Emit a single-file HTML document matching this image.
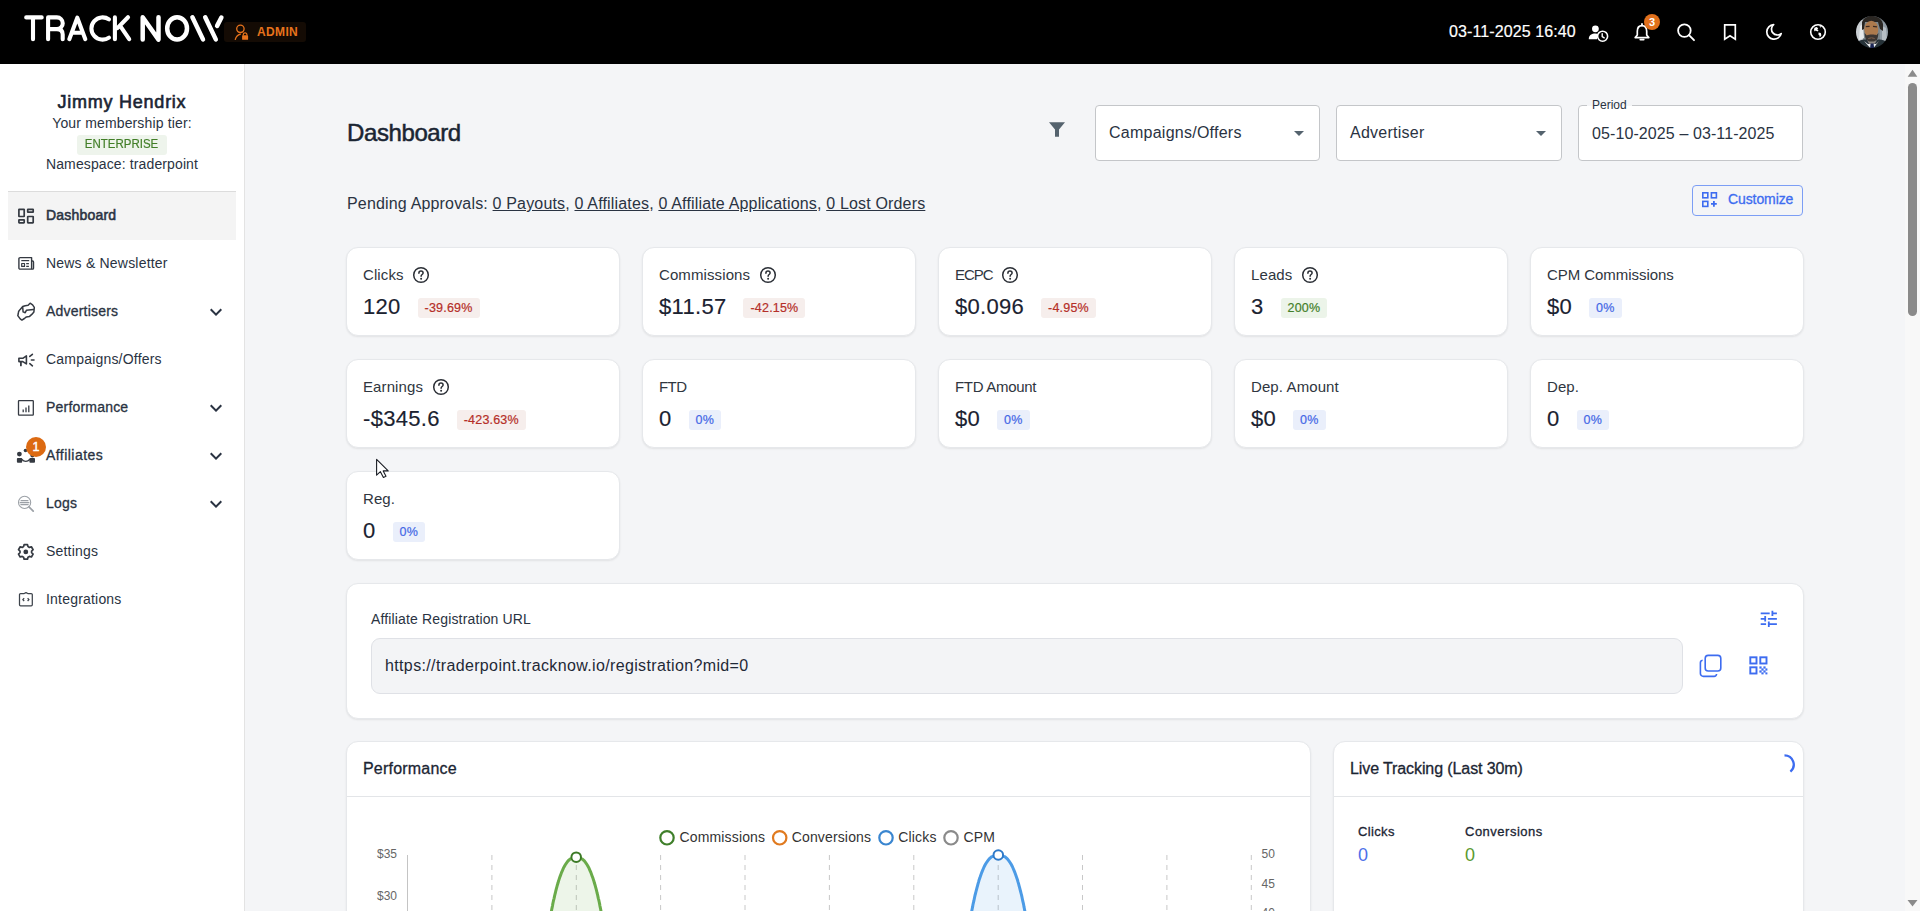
<!DOCTYPE html>
<html><head><meta charset="utf-8">
<style>
*{box-sizing:border-box;margin:0;padding:0}
html,body{width:1920px;height:911px;overflow:hidden}
body{font-family:"Liberation Sans",sans-serif;background:#f4f5f7;color:#1f2937;position:relative}
.a{position:absolute;white-space:nowrap}
#hdr{position:absolute;left:0;top:0;width:1920px;height:64px;background:#000}
#side{position:absolute;left:0;top:64px;width:245px;height:847px;background:#fff;border-right:1px solid #e3e3e3}
.nav{position:absolute;left:8px;width:228px;height:48px}
.nav.act{background:#f4f4f4}
.nav .t{position:absolute;left:38px;top:16px;font-size:14px;line-height:14px;color:#2a3342;letter-spacing:.2px}
.nav svg{position:absolute;left:8px;top:12px}
.nav .chev{position:absolute;left:196px;top:12px}
.med{-webkit-text-stroke:0.3px currentColor;letter-spacing:.2px}
.card{position:absolute;background:#fff;border-radius:12px;border:1px solid #e6e8eb;box-shadow:0 1px 2px rgba(0,0,0,.08)}
.sc{width:274px;height:89px}
.sc .l{position:absolute;left:16px;top:18px;font-size:15px;line-height:15px;color:#2f3640;letter-spacing:.1px;display:flex;align-items:center;white-space:nowrap;height:18px;top:17px}
.sc .hp{margin-left:8.5px;position:relative;top:.5px}
.sc .vr{position:absolute;left:16px;top:50px;height:20px;display:flex;align-items:center;white-space:nowrap}
.sc .v{font-size:22px;line-height:20px;color:#1b2230;margin-right:17px;letter-spacing:.3px;-webkit-text-stroke:.15px #1b2230;position:relative;top:-1.5px}
.sc .b{height:20px;padding:0 7px;font-size:12.5px;line-height:20px;border-radius:3px;letter-spacing:.2px;-webkit-text-stroke:.2px currentColor}
.neg{background:#f6eeec;color:#b52f28}
.pos{background:#ecf4e9;color:#437f2a}
.zer{background:#eaeffb;color:#4467e6}
.help{position:absolute;top:18px}
</style></head>
<body>
<div id="hdr">
  <svg class="a" style="left:0;top:0" width="320" height="64" viewBox="0 0 320 64">
    <g fill="none" stroke="#fff" stroke-linecap="round" stroke-linejoin="round">
      <g stroke-width="4.1">
        <path d="M26.2 17.4H41.7M33 17.4V39.2"/>
        <path d="M48.1 39.2V17.4H56.9a5.85 5.85 0 0 1 0 11.7H48.1M56.9 29.1C60.5 29.1 62.7 31 62.7 34.5V39.2"/>
        <path d="M69.3 39.2L77.3 17.6L85.3 39.2M72.4 32.8H82.2"/>
        <path d="M109 19.4A11.15 11.15 0 1 0 109 37.6"/>
        <path d="M114.9 17.4V39.2M117.4 28.1L128 17.2M120.5 26.3L129.2 39.2"/>
      </g>
      <g stroke-width="4.5">
        <path d="M142.7 39.6V17.3L158.5 39.6V17.3"/>
        <ellipse cx="177.1" cy="28.45" rx="9.9" ry="11.15"/>
        <path d="M192.4 17.3L203 39.4M205.2 17.3L215.8 39.4M221.4 17.5L217.1 25.9"/>
      </g>
    </g>
  </svg>
  <div class="a" style="left:224px;top:22px;width:82px;height:20px;background:#140b04;border-radius:3px"></div>
  <svg class="a" style="left:234px;top:24px" width="16" height="16" viewBox="0 0 16 16">
    <circle cx="6.4" cy="4.8" r="3.7" fill="none" stroke="#e8731c" stroke-width="1.3"/>
    <path d="M1.3 15.4Q2.4 11.4 6.4 10.2" fill="none" stroke="#e8731c" stroke-width="1.3" stroke-linecap="round"/>
    <rect x="8.1" y="11.3" width="6" height="4.5" rx=".6" fill="#e8731c"/>
    <path d="M9.3 11.6V10.6a1.8 1.8 0 0 1 3.6 0V11.6" fill="none" stroke="#e8731c" stroke-width="1.2"/>
  </svg>
  <div class="a" style="left:257px;top:26px;font-size:12px;line-height:12px;font-weight:bold;color:#e8731c;letter-spacing:.35px">ADMIN</div>

  <div class="a" style="left:1449px;top:24px;font-size:16px;line-height:16px;color:#fff;letter-spacing:.1px;-webkit-text-stroke:.2px #fff">03-11-2025 16:40</div>

  <svg class="a" style="left:1588px;top:24px" width="21" height="19" viewBox="0 0 21 19">
    <circle cx="7.4" cy="4.8" r="3.4" fill="#fff"/>
    <path d="M0.8 15.2C0.8 11.3 4 9.6 7.2 9.6C8.6 9.6 9.8 9.9 10.8 10.4C9.6 11.6 9 13.2 9 15.2Z" fill="#fff"/>
    <circle cx="14.6" cy="12.2" r="5" fill="#000" stroke="#fff" stroke-width="1.6"/>
    <path d="M14.2 9.8V12.5L16.2 13.8" fill="none" stroke="#fff" stroke-width="1.4" stroke-linecap="round"/>
  </svg>
  <svg class="a" style="left:1633px;top:23px" width="18" height="19" viewBox="0 0 18 19">
    <path d="M9 2.6C6 2.6 4.3 5 4.3 8.2V12L2.2 14.6H15.8L13.7 12V8.2C13.7 5 12 2.6 9 2.6Z" fill="none" stroke="#fff" stroke-width="1.7" stroke-linejoin="round"/><path d="M9 .9V2.4" stroke="#fff" stroke-width="1.8" stroke-linecap="round"/>
    <path d="M7.3 16.6H10.7" stroke="#fff" stroke-width="1.8" stroke-linecap="round"/>
  </svg>
  <div class="a" style="left:1644px;top:14px;width:16px;height:16px;border-radius:50%;background:#e0701c;color:#fff;font-size:11px;line-height:16px;text-align:center;font-weight:bold">3</div>
  <svg class="a" style="left:1676px;top:22px" width="20" height="20" viewBox="0 0 20 20">
    <circle cx="8.4" cy="8.6" r="6.3" fill="none" stroke="#fff" stroke-width="1.8"/>
    <path d="M13 13.2L18 18.2" stroke="#fff" stroke-width="1.9" stroke-linecap="round"/>
  </svg>
  <svg class="a" style="left:1722px;top:23px" width="16" height="18" viewBox="0 0 16 18">
    <path d="M2.7 1.8H13.3V16.2L8 12.8L2.7 16.2Z" fill="none" stroke="#fff" stroke-width="1.7" stroke-linejoin="miter"/>
  </svg>
  <svg class="a" style="left:1764px;top:22px" width="20" height="20" viewBox="0 0 20 20">
    <path d="M9.6 2.6A7.3 7.3 0 1 0 17.2 11.6A5.6 5.6 0 0 1 9.6 2.6Z" fill="none" stroke="#fff" stroke-width="1.7" stroke-linejoin="round"/>
  </svg>
  <svg class="a" style="left:1808px;top:22px" width="20" height="20" viewBox="0 0 20 20">
    <circle cx="10" cy="10" r="7.3" fill="none" stroke="#fff" stroke-width="1.6"/>
    <path d="M6.4 5.8L8.6 5L10.2 6.2L9.2 7.4L10.6 8.2L9.4 9.6L7.6 8.6L6.8 9.4L6 8Z" fill="#fff"/>
    <path d="M10.6 10.6L12.8 11L13.4 13.2L11.8 15.4L11.4 13.4L10.4 12.4Z" fill="#fff"/>
    <path d="M11.6 4L13.4 4.6L12.2 5.8Z" fill="#fff"/>
  </svg>
  <svg class="a" style="left:1856px;top:16px" width="32" height="32" viewBox="0 0 32 32">
    <defs><clipPath id="av"><circle cx="16" cy="16" r="16"/></clipPath><filter id="bl"><feGaussianBlur stdDeviation=".6"/></filter></defs>
    <g clip-path="url(#av)"><g filter="url(#bl)">
      <rect x="-2" y="-2" width="36" height="36" fill="#7d878d"/>
      <rect x="-2" y="4" width="9" height="30" fill="#c9ced2"/>
      <rect x="24" y="6" width="10" height="22" fill="#8f9aa3"/>
      <path d="M4 10L7 8L8 22L3 24Z" fill="#e6e9eb"/>
      <path d="M26 10L30 12L31 26L26 24Z" fill="#b6bec4"/>
      <path d="M6 6C8 1 13 -0.5 17 0C22 0.5 26 3 27 8L27 15L24 13L22 6L9 6L8 13L6 14Z" fill="#2a2624"/>
      <ellipse cx="15.3" cy="13.4" rx="7" ry="8.6" fill="#ad7a4e"/>
      <path d="M9.8 10.6L13.6 10.4M17 10.4L21 10.8" stroke="#3a2a22" stroke-width="1.2"/>
      <path d="M8.6 17C9 24 12 28.6 15.6 28.6C19.2 28.6 22 24 22.4 17L20.4 19.2C18.6 18.4 12.8 18.4 10.8 19.4Z" fill="#3a3431"/><path d="M10.5 24C12 27.5 14 28.6 15.6 28.6C17.2 28.6 19.4 27.5 20.6 24L18 25.5H13Z" fill="#8d8783"/>
      <path d="M12.4 22.6C14 21.8 17 21.8 18.6 22.6" stroke="#8a6a55" stroke-width="1"/>
      <path d="M12 27C14 28 17 28 20 27L16 32Z" fill="#7d7570"/>
      <path d="M-2 34L1 26C4 24 8 23 11 24L16 34Z" fill="#283038"/>
      <path d="M34 34L31 26C28 24 24 23 21 24L16 34Z" fill="#283038"/>
      <path d="M8 25L16 34L23 25L20 28L12 28Z" fill="#e9ecee"/>
      <path d="M14.6 27.4H17.6L18.2 33H14Z" fill="#1c2755"/>
    </g></g>
  </svg>
</div>

<div id="side">
  <div class="a" style="left:0;top:29px;width:244px;text-align:center;font-size:18px;line-height:18px;color:#1b2533" ><span style="letter-spacing:.75px;-webkit-text-stroke:.6px #1b2533">Jimmy Hendrix</span></div>
  <div class="a" style="left:0;top:52px;width:244px;text-align:center;font-size:14px;line-height:14px;color:#2a3342;letter-spacing:.15px">Your membership tier:</div>
  <div class="a" style="left:77px;top:71px;width:90px;height:20px;background:#eef4ec;border-radius:3px;text-align:center;font-size:13px;line-height:20px;color:#427f28;-webkit-text-stroke:.2px #427f28"><span style="display:inline-block;transform:scaleX(.885);position:relative;top:-1px">ENTERPRISE</span></div>
  <div class="a" style="left:0;top:93px;width:244px;text-align:center;font-size:14px;line-height:14px;color:#2a3342;letter-spacing:.12px">Namespace: traderpoint</div>
  <div class="a" style="left:8px;top:127px;width:228px;height:1px;background:#dcdcdc"></div>
  <div class="nav act" style="top:128px"><svg width="24" height="24" viewBox="0 0 24 24"><g fill="none" stroke="#353a42" stroke-width="1.7"><rect x="2.9" y="5.3" width="5.3" height="7.2" rx=".3"/><rect x="2.9" y="15.8" width="5.3" height="3.1" rx=".3"/><rect x="11.7" y="5.3" width="5.5" height="2.9" rx=".3"/><rect x="11.7" y="12.5" width="5.5" height="6.4" rx=".3"/></g></svg><div class="t" style="-webkit-text-stroke:.55px #2a3342">Dashboard</div></div>
  <div class="nav" style="top:176px"><svg width="24" height="24" viewBox="0 0 24 24"><g fill="none" stroke="#353a42" stroke-width="1.4" stroke-linejoin="round"><path d="M4.1 5.6H15.6V17.1H4.1A1.2 1.2 0 0 1 2.9 15.9V6.8A1.2 1.2 0 0 1 4.1 5.6Z"/><path d="M15.6 9H16.6A.9.9 0 0 1 17.5 9.9V16.2A.9.9 0 0 1 16.6 17.1H15.6"/><path d="M5.3 8.6H13.2" stroke-width="1.2"/><rect x="5.7" y="11.5" width="2.8" height="2.9" stroke-width="1.2"/><path d="M10.2 11.7H12.9M10.2 14.3H12.9" stroke-width="1.2"/></g></svg><div class="t " style="">News &amp; Newsletter</div></div>
  <div class="nav" style="top:224px"><svg width="24" height="24" viewBox="0 0 24 24"><g fill="none" stroke="#353a42" stroke-width="1.5" stroke-linejoin="round" stroke-linecap="round"><path d="M1.8 15.6L4.2 18.9L5.9 20.1L8.4 18.5L10.4 16.9L13.3 16.6L15.8 14.4L17.9 11.9L18.3 7.4L16.6 4.9L14.1 3.2L12.1 5.3L9.2 5.7L6.7 6.5L4.2 9.4L2.6 11.5L2.2 14Z"/><path d="M6.7 7.4L7.1 11.9L9.2 12.7L10.4 10.3L17.4 9.4"/></g></svg><div class="t med" style="">Advertisers</div><svg class="chev" width="24" height="24" viewBox="0 0 24 24"><path d="M16.59 8.59L12 13.17 7.41 8.59 6 10l6 6 6-6z" fill="#2a3342"/></svg></div>
  <div class="nav" style="top:272px"><svg width="24" height="24" viewBox="0 0 24 24"><g fill="none" stroke="#353a42" stroke-width="1.6" stroke-linejoin="round" stroke-linecap="round"><path d="M2.9 10.3H6.8L10.4 7.9V15.9L6.8 13.6H2.9Z"/><path d="M4.9 13.8V17.4" stroke-width="1.8"/><path d="M13.8 8.4L16.4 6.3M15.4 12H18M13.8 15.7L16.4 17.8"/></g></svg><div class="t " style="">Campaigns/Offers</div></div>
  <div class="nav" style="top:320px"><svg width="24" height="24" viewBox="0 0 24 24"><g fill="none" stroke="#353a42" stroke-width="1.3"><rect x="2.5" y="4.6" width="14.8" height="14.6" rx=".6"/></g><g stroke="#353a42" stroke-width="1.3"><path d="M7.2 16.2V13.4M10 16.2V11.6M12.8 16.2V9.6"/></g></svg><div class="t med" style="">Performance</div><svg class="chev" width="24" height="24" viewBox="0 0 24 24"><path d="M16.59 8.59L12 13.17 7.41 8.59 6 10l6 6 6-6z" fill="#2a3342"/></svg></div>
  <div class="nav" style="top:368px"><svg width="24" height="24" viewBox="0 0 24 24"><g fill="#353a42"><circle cx="3.4" cy="10.1" r="2.4"/><circle cx="9.5" cy="6.5" r="1.8"/><circle cx="16.4" cy="11.4" r="2"/><rect x="0.9" y="14.1" width="5.3" height="4.6" rx=".9"/><rect x="13.4" y="14.1" width="5.6" height="4.6" rx=".9"/></g><path d="M5.6 15.2Q9.8 19.6 14 15.2" fill="none" stroke="#353a42" stroke-width="1.4"/></svg><div class="t med" style="letter-spacing:.45px">Affiliates</div><svg class="chev" width="24" height="24" viewBox="0 0 24 24"><path d="M16.59 8.59L12 13.17 7.41 8.59 6 10l6 6 6-6z" fill="#2a3342"/></svg></div>
  <div class="nav" style="top:416px"><svg width="24" height="24" viewBox="0 0 24 24"><g fill="none" stroke="#9ca1a7" stroke-width="1.1"><circle cx="8.6" cy="10.4" r="6.1"/><path d="M13 14.8L17.2 19.2" stroke-width="1.7" stroke-linecap="round"/><path d="M4.6 8.6H12.4M3.6 10.6H13.4M4.4 12.6H12.6"/></g></svg><div class="t med" style="">Logs</div><svg class="chev" width="24" height="24" viewBox="0 0 24 24"><path d="M16.59 8.59L12 13.17 7.41 8.59 6 10l6 6 6-6z" fill="#2a3342"/></svg></div>
  <div class="nav" style="top:464px"><svg width="24" height="24" viewBox="0 0 24 24"><g transform="translate(9.8 11.9)"><path fill="none" stroke="#353a42" stroke-width="1.7" stroke-linejoin="round" d="M-1.7-7.3H1.7L2.2-5.3L3.6-4.5L5.6-5.1L7.3-2.2L5.8-0.8V0.8L7.3 2.2L5.6 5.1L3.6 4.5L2.2 5.3L1.7 7.3H-1.7L-2.2 5.3L-3.6 4.5L-5.6 5.1L-7.3 2.2L-5.8 0.8V-0.8L-7.3-2.2L-5.6-5.1L-3.6-4.5L-2.2-5.3Z"/><circle r="2.4" fill="#353a42"/></g></svg><div class="t " style="">Settings</div></div>
  <div class="nav" style="top:512px"><svg width="24" height="24" viewBox="0 0 24 24"><g fill="none" stroke="#3d434b" stroke-width="1.25" stroke-linejoin="round"><path d="M4.6 5.5H8.2L10 4.6L11.8 5.5H15.2A1.1 1.1 0 0 1 16.3 6.6V16.8A1.1 1.1 0 0 1 15.2 17.9H4.6A1.1 1.1 0 0 1 3.5 16.8V6.6A1.1 1.1 0 0 1 4.6 5.5Z"/><path d="M8.2 10.2L6.8 11.6L8.2 13M11.6 10.2L13 11.6L11.6 13" stroke-width="1.3"/></g></svg><div class="t " style="">Integrations</div></div>
  <div class="a" style="left:26px;top:373px;width:20px;height:20px;border-radius:50%;background:#dc6a12;color:#fff;font-size:12.5px;line-height:20px;text-align:center;-webkit-text-stroke:.4px #fff">1</div>
</div>


<div class="a med" style="left:347px;top:121px;font-size:24px;line-height:24px;color:#1b2533;letter-spacing:-.4px;-webkit-text-stroke:.5px #1b2533">Dashboard</div>
<svg class="a" style="left:1048px;top:121px" width="18" height="17" viewBox="0 0 18 17"><path d="M1 1.2H17L11 8.6V15.8H7V8.6Z" fill="#55636e"/></svg>
<div class="a" style="left:1095px;top:105px;width:225px;height:56px;background:#fff;border:1px solid #c4c6c9;border-radius:4px"></div>
<div class="a" style="left:1109px;top:125px;font-size:16px;line-height:16px;color:#2a3342;letter-spacing:.25px">Campaigns/Offers</div>
<svg class="a" style="left:1287px;top:121px" width="24" height="24" viewBox="0 0 24 24"><path d="M7 10l5 5 5-5z" fill="#55636e"/></svg>
<div class="a" style="left:1336px;top:105px;width:226px;height:56px;background:#fff;border:1px solid #c4c6c9;border-radius:4px"></div>
<div class="a" style="left:1350px;top:125px;font-size:16px;line-height:16px;color:#2a3342;letter-spacing:.25px">Advertiser</div>
<svg class="a" style="left:1529px;top:121px" width="24" height="24" viewBox="0 0 24 24"><path d="M7 10l5 5 5-5z" fill="#55636e"/></svg>
<div class="a" style="left:1578px;top:105px;width:225px;height:56px;background:#fff;border:1px solid #c4c6c9;border-radius:4px"></div>
<div class="a" style="left:1587px;top:99px;padding:0 5px;height:12px;background:#f4f5f7;font-size:12px;line-height:12px;color:#2a3342;background:linear-gradient(#f4f5f7 0,#f4f5f7 7px,#fff 7px)">Period</div>
<div class="a" style="left:1592px;top:126px;font-size:16px;line-height:16px;color:#2a3342;letter-spacing:.1px">05-10-2025 &ndash; 03-11-2025</div>
<div class="a" style="left:347px;top:196px;font-size:16px;line-height:16px;color:#2a3342;letter-spacing:.17px">Pending Approvals: <u>0 Payouts</u>, <u>0 Affiliates</u>, <u>0 Affiliate Applications</u>, <u>0 Lost Orders</u></div>
<div class="a" style="left:1692px;top:185px;width:111px;height:31px;border:1px solid #7c9ef5;border-radius:4px"></div>
<svg class="a" style="left:1701px;top:191px" width="18" height="18" viewBox="0 0 18 18"><g fill="none" stroke="#3d6cf0" stroke-width="1.6"><rect x="1.8" y="1.8" width="5" height="5"/><rect x="10.4" y="1.8" width="5" height="5"/><rect x="1.8" y="10.4" width="5" height="5"/></g><path d="M12.9 10V15.8M10 12.9H15.8" stroke="#3d6cf0" stroke-width="1.8"/></svg>
<div class="a med" style="left:1728px;top:192px;font-size:14px;line-height:14px;color:#3d6cf0;letter-spacing:-.1px">Customize</div>
<div class="card sc" style="left:346px;top:247px"><div class="l">Clicks<svg class="hp" width="18" height="18" viewBox="0 0 18 18"><circle cx="9" cy="9" r="7.3" fill="none" stroke="#2b2f36" stroke-width="1.5"/><path d="M6.9 7.2C6.9 5.9 7.8 5.1 9 5.1C10.2 5.1 11.1 5.9 11.1 7C11.1 8.5 9.1 8.5 9.1 10.2" fill="none" stroke="#2b2f36" stroke-width="1.5" stroke-linecap="round"/><circle cx="9.1" cy="12.7" r="1" fill="#2b2f36"/></svg></div><div class="vr"><span class="v">120</span><span class="b neg">-39.69%</span></div></div>
<div class="card sc" style="left:642px;top:247px"><div class="l">Commissions<svg class="hp" width="18" height="18" viewBox="0 0 18 18"><circle cx="9" cy="9" r="7.3" fill="none" stroke="#2b2f36" stroke-width="1.5"/><path d="M6.9 7.2C6.9 5.9 7.8 5.1 9 5.1C10.2 5.1 11.1 5.9 11.1 7C11.1 8.5 9.1 8.5 9.1 10.2" fill="none" stroke="#2b2f36" stroke-width="1.5" stroke-linecap="round"/><circle cx="9.1" cy="12.7" r="1" fill="#2b2f36"/></svg></div><div class="vr"><span class="v">$11.57</span><span class="b neg">-42.15%</span></div></div>
<div class="card sc" style="left:938px;top:247px"><div class="l" style="letter-spacing:-1px">ECPC<svg class="hp" width="18" height="18" viewBox="0 0 18 18"><circle cx="9" cy="9" r="7.3" fill="none" stroke="#2b2f36" stroke-width="1.5"/><path d="M6.9 7.2C6.9 5.9 7.8 5.1 9 5.1C10.2 5.1 11.1 5.9 11.1 7C11.1 8.5 9.1 8.5 9.1 10.2" fill="none" stroke="#2b2f36" stroke-width="1.5" stroke-linecap="round"/><circle cx="9.1" cy="12.7" r="1" fill="#2b2f36"/></svg></div><div class="vr"><span class="v">$0.096</span><span class="b neg">-4.95%</span></div></div>
<div class="card sc" style="left:1234px;top:247px"><div class="l">Leads<svg class="hp" width="18" height="18" viewBox="0 0 18 18"><circle cx="9" cy="9" r="7.3" fill="none" stroke="#2b2f36" stroke-width="1.5"/><path d="M6.9 7.2C6.9 5.9 7.8 5.1 9 5.1C10.2 5.1 11.1 5.9 11.1 7C11.1 8.5 9.1 8.5 9.1 10.2" fill="none" stroke="#2b2f36" stroke-width="1.5" stroke-linecap="round"/><circle cx="9.1" cy="12.7" r="1" fill="#2b2f36"/></svg></div><div class="vr"><span class="v">3</span><span class="b pos">200%</span></div></div>
<div class="card sc" style="left:1530px;top:247px"><div class="l" style="letter-spacing:-.05px">CPM Commissions</div><div class="vr"><span class="v">$0</span><span class="b zer">0%</span></div></div>
<div class="card sc" style="left:346px;top:359px"><div class="l">Earnings<svg class="hp" width="18" height="18" viewBox="0 0 18 18"><circle cx="9" cy="9" r="7.3" fill="none" stroke="#2b2f36" stroke-width="1.5"/><path d="M6.9 7.2C6.9 5.9 7.8 5.1 9 5.1C10.2 5.1 11.1 5.9 11.1 7C11.1 8.5 9.1 8.5 9.1 10.2" fill="none" stroke="#2b2f36" stroke-width="1.5" stroke-linecap="round"/><circle cx="9.1" cy="12.7" r="1" fill="#2b2f36"/></svg></div><div class="vr"><span class="v">-$345.6</span><span class="b neg">-423.63%</span></div></div>
<div class="card sc" style="left:642px;top:359px"><div class="l" style="letter-spacing:-.6px">FTD</div><div class="vr"><span class="v">0</span><span class="b zer">0%</span></div></div>
<div class="card sc" style="left:938px;top:359px"><div class="l" style="letter-spacing:-.3px">FTD Amount</div><div class="vr"><span class="v">$0</span><span class="b zer">0%</span></div></div>
<div class="card sc" style="left:1234px;top:359px"><div class="l">Dep. Amount</div><div class="vr"><span class="v">$0</span><span class="b zer">0%</span></div></div>
<div class="card sc" style="left:1530px;top:359px"><div class="l">Dep.</div><div class="vr"><span class="v">0</span><span class="b zer">0%</span></div></div>
<div class="card sc" style="left:346px;top:471px"><div class="l">Reg.</div><div class="vr"><span class="v">0</span><span class="b zer">0%</span></div></div>

<div class="card" style="left:346px;top:583px;width:1458px;height:136px"></div>
<div class="a" style="left:371px;top:612px;font-size:14px;line-height:14px;color:#2a3342;letter-spacing:.15px">Affiliate Registration URL</div>
<svg class="a" style="left:1758px;top:608px" width="21.6" height="21.6" viewBox="0 0 24 24"><path fill="#3d6cf0" d="M3 17v2h6v-2H3zM3 5v2h10V5H3zm10 16v-2h8v-2h-8v-2h-2v6h2zM7 9v2H3v2h4v2h2V9H7zm14 4v-2H11v2h10zm-6-4h2V7h4V5h-4V3h-2v6z"/></svg>
<div class="a" style="left:371px;top:638px;width:1312px;height:56px;background:#f3f4f6;border:1px solid #dfe1e6;border-radius:9px"></div>
<div class="a" style="left:385px;top:658px;font-size:16px;line-height:16px;color:#1f2937;letter-spacing:.36px">https://traderpoint.tracknow.io/registration?mid=0</div>
<svg class="a" style="left:1698px;top:653px" width="26" height="26" viewBox="0 0 26 26"><g fill="none" stroke="#3d6cf0" stroke-width="1.6"><rect x="7.2" y="2.4" width="15.6" height="15.6" rx="3"/><path d="M4.6 7.2A2.6 2.6 0 0 0 2.4 9.8V20.4A3 3 0 0 0 5.4 23.4H16A2.6 2.6 0 0 0 18.6 21"/></g></svg>
<svg class="a" style="left:1748px;top:655px" width="22" height="22" viewBox="0 0 22 22"><g fill="none" stroke="#3d6cf0" stroke-width="1.9"><rect x="2.3" y="2.3" width="6.2" height="6.2"/><rect x="12.3" y="2.3" width="6.2" height="6.2"/><rect x="2.3" y="12.3" width="6.2" height="6.2"/></g><g fill="#3d6cf0"><rect x="11.4" y="11.4" width="2.2" height="2.2"/><rect x="15.4" y="11.4" width="2.2" height="2.2"/><rect x="13.4" y="13.4" width="2.2" height="2.2"/><rect x="11.4" y="15.4" width="2.2" height="2.2"/><rect x="15.4" y="15.4" width="2.2" height="2.2"/><rect x="17.4" y="13.4" width="2" height="2.2"/><rect x="13.4" y="17.4" width="2.2" height="2"/><rect x="17.4" y="17.4" width="2" height="2"/></g></svg>

<div class="card" style="left:346px;top:741px;width:965px;height:200px;overflow:hidden">
  <div class="a med" style="left:16px;top:19px;font-size:16px;line-height:16px;color:#1b2533">Performance</div>
  <div class="a" style="left:0;top:54px;width:965px;height:1px;background:#e3e5e8"></div>
</div>
<div class="card" style="left:1333px;top:741px;width:471px;height:200px;overflow:hidden">
  <div class="a med" style="left:16px;top:19px;font-size:16px;line-height:16px;color:#1b2533;letter-spacing:-.1px">Live Tracking (Last 30m)</div>
  <div class="a" style="left:0;top:54px;width:471px;height:1px;background:#e3e5e8"></div>
  <svg class="a" style="left:430px;top:2px" width="40" height="40" viewBox="1764 744 40 40"><path d="M1784.5 755.3A9.2 9.2 0 0 1 1790.4 771.55" fill="none" stroke="#3d6cf0" stroke-width="2.3"/></svg>
  <div class="a med" style="left:24px;top:83px;font-size:13px;line-height:13px;color:#1b2533;letter-spacing:.35px">Clicks</div>
  <div class="a" style="left:24px;top:104px;font-size:18px;line-height:18px;color:#4d6fe9">0</div>
  <div class="a med" style="left:131px;top:83px;font-size:13px;line-height:13px;color:#1b2533;letter-spacing:.5px">Conversions</div>
  <div class="a" style="left:131px;top:104px;font-size:18px;line-height:18px;color:#5a9a2e">0</div>
</div>

<svg class="a" style="left:347px;top:797px" width="963" height="114" viewBox="347 797 963 114">
  <g stroke="#c8c8c8" stroke-width="1" stroke-dasharray="5 5" fill="none"><path d="M491.9 855V915"/><path d="M576.3 855V915"/><path d="M660.6 855V915"/><path d="M745.0 855V915"/><path d="M829.4 855V915"/><path d="M913.8 855V915"/><path d="M998.2 855V915"/><path d="M1082.5 855V915"/><path d="M1166.9 855V915"/><path d="M1251.3 855V915"/></g>
  <path d="M407.5 855V915" stroke="#c4c4c4" stroke-width="1"/>
  <g font-family="Liberation Sans" font-size="12" fill="#666">
    <text x="397" y="858" text-anchor="end">$35</text>
    <text x="397" y="900" text-anchor="end">$30</text>
    <text x="1261.5" y="858">50</text>
    <text x="1261.5" y="887.5">45</text>
    <text x="1261.5" y="917">40</text>
  </g>
  <path d="M548.1 930.0 L548.4 928.1 L548.7 926.3 L549.0 924.4 L549.3 922.5 L549.6 920.7 L550.0 918.8 L550.3 916.9 L550.7 915.1 L551.0 913.2 L551.4 911.3 L551.7 909.5 L552.1 907.6 L552.5 905.7 L552.8 903.9 L553.2 902.0 L553.6 900.1 L554.1 898.3 L554.5 896.4 L554.9 894.5 L555.4 892.7 L555.8 890.8 L556.3 888.9 L556.8 887.1 L557.3 885.2 L557.9 883.3 L558.4 881.5 L559.0 879.6 L559.6 877.7 L560.3 875.9 L561.0 874.0 L561.7 872.1 L562.5 870.3 L563.3 868.4 L564.3 866.5 L565.3 864.7 L566.6 862.8 L568.1 860.9 L570.1 859.1 L576.2 857.2 L582.3 859.1 L584.3 860.9 L585.8 862.8 L587.1 864.7 L588.1 866.5 L589.1 868.4 L589.9 870.3 L590.7 872.1 L591.4 874.0 L592.1 875.9 L592.8 877.7 L593.4 879.6 L594.0 881.5 L594.5 883.3 L595.1 885.2 L595.6 887.1 L596.1 888.9 L596.6 890.8 L597.0 892.7 L597.5 894.5 L597.9 896.4 L598.3 898.3 L598.8 900.1 L599.2 902.0 L599.6 903.9 L599.9 905.7 L600.3 907.6 L600.7 909.5 L601.0 911.3 L601.4 913.2 L601.7 915.1 L602.1 916.9 L602.4 918.8 L602.8 920.7 L603.1 922.5 L603.4 924.4 L603.7 926.3 L604.0 928.1 L604.3 930.0" fill="#6aab4a" fill-opacity=".12" stroke="#6aab4a" stroke-width="3"/>
  <circle cx="576.2" cy="857.2" r="4.8" fill="#fff" stroke="#3c7a26" stroke-width="2"/>
  <path d="M968.4 930.0 L968.7 928.1 L969.0 926.2 L969.4 924.2 L969.7 922.3 L970.0 920.4 L970.4 918.5 L970.7 916.5 L971.1 914.6 L971.4 912.7 L971.8 910.8 L972.2 908.8 L972.6 906.9 L972.9 905.0 L973.3 903.1 L973.8 901.2 L974.2 899.2 L974.6 897.3 L975.0 895.4 L975.5 893.5 L976.0 891.5 L976.5 889.6 L977.0 887.7 L977.5 885.8 L978.0 883.8 L978.6 881.9 L979.1 880.0 L979.8 878.1 L980.4 876.2 L981.1 874.2 L981.8 872.3 L982.6 870.4 L983.4 868.5 L984.3 866.5 L985.3 864.6 L986.4 862.7 L987.7 860.8 L989.3 858.8 L991.5 856.9 L998.3 855.0 L1005.1 856.9 L1007.3 858.8 L1008.9 860.8 L1010.2 862.7 L1011.3 864.6 L1012.3 866.5 L1013.2 868.5 L1014.0 870.4 L1014.8 872.3 L1015.5 874.2 L1016.2 876.2 L1016.8 878.1 L1017.5 880.0 L1018.0 881.9 L1018.6 883.8 L1019.1 885.8 L1019.6 887.7 L1020.1 889.6 L1020.6 891.5 L1021.1 893.5 L1021.6 895.4 L1022.0 897.3 L1022.4 899.2 L1022.8 901.2 L1023.3 903.1 L1023.7 905.0 L1024.0 906.9 L1024.4 908.8 L1024.8 910.8 L1025.2 912.7 L1025.5 914.6 L1025.9 916.5 L1026.2 918.5 L1026.6 920.4 L1026.9 922.3 L1027.2 924.2 L1027.6 926.2 L1027.9 928.1 L1028.2 930.0" fill="#4c9be6" fill-opacity=".12" stroke="#4c9be6" stroke-width="3"/>
  <circle cx="998.3" cy="855" r="4.8" fill="#fff" stroke="#2f7ac9" stroke-width="2"/>
  <g fill="none" stroke-width="2.2">
    <circle cx="667" cy="837.8" r="6.7" stroke="#3f7f2a"/>
    <circle cx="779.7" cy="837.8" r="6.7" stroke="#e07a1f"/>
    <circle cx="886" cy="837.8" r="6.7" stroke="#3a86d0"/>
    <circle cx="951" cy="837.8" r="6.7" stroke="#8a8a8a"/>
  </g>
  <g font-family="Liberation Sans" font-size="14" fill="#333" letter-spacing=".15">
    <text x="679.5" y="841.8">Commissions</text>
    <text x="791.7" y="841.8">Conversions</text>
    <text x="898.3" y="841.8">Clicks</text>
    <text x="963.6" y="841.8">CPM</text>
  </g>
</svg>

<div class="a" style="left:1905px;top:64px;width:15px;height:847px;background:#f8f8f8"></div>
<svg class="a" style="left:1905px;top:64px" width="15" height="847" viewBox="0 0 15 847">
  <path d="M2.7 12.8L7.5 5.8L12.3 12.8Z" fill="#8a8a8a"/>
  <rect x="3" y="19" width="9" height="233" rx="4.5" fill="#8a8a8a"/>
  <path d="M2.5 836L7.5 842.6L12.5 836Z" fill="#8a8a8a"/>
</svg>
<svg class="a" style="left:370px;top:455px" width="24" height="28" viewBox="370 455 24 28"><path d="M376.6 459.4L376.6 475.2L380.4 471.7L383.4 477.4L386 476.3L383.2 470.9L388.2 470.9Z" fill="#fff" stroke="#1a1d24" stroke-width="1.1" stroke-linejoin="round"/></svg>
</body></html>
